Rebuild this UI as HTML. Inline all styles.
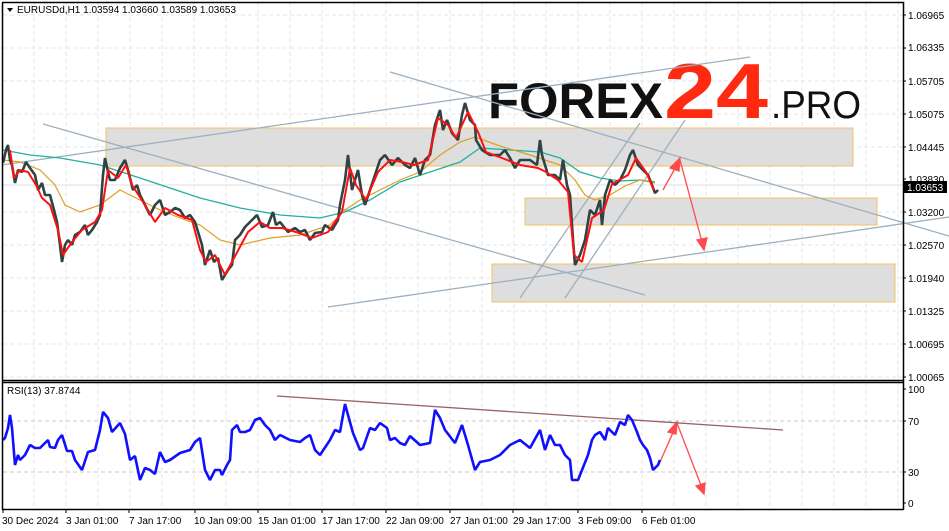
<!DOCTYPE html>
<html><head><meta charset="utf-8"><style>
html,body{margin:0;padding:0;background:#fff;width:949px;height:531px;overflow:hidden}
svg{display:block}
text{font-family:"Liberation Sans",sans-serif;font-size:10px;fill:#000}
</style></head><body>
<svg width="949" height="531" viewBox="0 0 949 531" xmlns="http://www.w3.org/2000/svg">
<g stroke="#e4e4e4" stroke-dasharray="4,3" stroke-width="1">
<path d="M34 3V380M66 3V380M98 3V380M130 3V380M162 3V380M194 3V380M226 3V380M258 3V380M290 3V380M322 3V380M354 3V380M386 3V380M418 3V380M450 3V380M482 3V380M514 3V380M546 3V380M578 3V380M610 3V380M642 3V380M674 3V380M706 3V380M738 3V380M770 3V380M802 3V380M834 3V380M866 3V380M898 3V380"/>
<path d="M3 15H903M3 48H903M3 81H903M3 114H903M3 147H903M3 212H903M3 245H903M3 278H903M3 311H903M3 344H903M3 377H903"/>
<path d="M34 383V509M66 383V509M98 383V509M130 383V509M162 383V509M194 383V509M226 383V509M258 383V509M290 383V509M322 383V509M354 383V509M386 383V509M418 383V509M450 383V509M482 383V509M514 383V509M546 383V509M578 383V509M610 383V509M642 383V509M674 383V509M706 383V509M738 383V509M770 383V509M802 383V509M834 383V509M866 383V509M898 383V509"/>
</g>
<line x1="3" y1="421" x2="903" y2="421" stroke="#c8c8c8" stroke-dasharray="4,3"/>
<line x1="3" y1="472" x2="903" y2="472" stroke="#c8c8c8" stroke-dasharray="4,3"/>
<line x1="3" y1="185" x2="903" y2="185" stroke="#dcdcdc"/>
<!-- zones -->
<rect x="106" y="128" width="747" height="38" fill="#dedede" stroke="#f2c262" stroke-width="1"/>
<rect x="525" y="198" width="352" height="27" fill="#dedede" stroke="#f2c262"/>
<rect x="492" y="264" width="403" height="38" fill="#dedede" stroke="#f2c262"/>
<!-- logo -->
<text x="488" y="118" textLength="175" lengthAdjust="spacingAndGlyphs" style="font-family:'Liberation Sans',sans-serif;font-weight:bold;font-size:50px;fill:#111">FOREX</text>
<text x="664" y="118" textLength="104" lengthAdjust="spacingAndGlyphs" style="font-family:'Liberation Sans',sans-serif;font-weight:bold;font-size:78px;fill:#ff2a10">24</text>
<text x="771" y="118" textLength="90" lengthAdjust="spacingAndGlyphs" style="font-family:'Liberation Sans',sans-serif;font-size:39px;fill:#111">.PRO</text>
<!-- trend lines -->
<g stroke="#9db0bf" stroke-width="1.3" fill="none">
<line x1="43" y1="124" x2="645" y2="295"/>
<line x1="2" y1="165" x2="750" y2="57"/>
<line x1="328" y1="307" x2="949" y2="217"/>
<line x1="390" y1="72" x2="949" y2="236"/>
<line x1="520" y1="298" x2="640" y2="123"/>
<line x1="565" y1="298" x2="685" y2="120"/>
</g>
<!-- MAs -->
<polyline fill="none" stroke="#20b0a0" stroke-width="1.3" points="3,150 30,155 60,158 100,165 140,178 200,198 240,208 280,215 320,218 345,212 370,200 400,182 430,172 460,162 480,148 510,150 540,152 560,158 580,172 600,178 620,181 640,180 655,182"/>
<polyline fill="none" stroke="#dba020" stroke-width="1.2" points="3,160 20,162 40,170 55,185 65,205 80,212 100,205 120,190 140,200 160,210 180,218 200,225 220,240 240,245 270,238 300,235 330,225 345,210 360,200 380,190 400,180 420,172 440,155 460,142 475,137 500,146 530,155 560,165 575,180 585,195 595,200 610,195 625,186 640,180 655,183"/>
<!-- price -->
<polyline fill="none" stroke="#2f4244" stroke-width="2.6" stroke-linejoin="bevel" points="3,163 6,150 8,145 10,160 12,165 15,183 18,170 22,172 26,162 30,168 35,175 38,190 42,183 45,195 50,195 54,210 57,222 60,245 62,262 65,245 68,240 72,245 75,235 80,232 85,225 88,235 92,230 97,222 100,215 103,175 105,158 108,172 110,180 115,180 120,168 125,160 128,170 133,190 137,185 140,195 145,205 150,215 155,205 160,200 165,215 170,212 175,208 180,210 185,218 190,215 195,222 202,245 205,265 210,250 214,262 218,258 222,280 228,270 232,265 235,240 240,235 245,227 252,220 257,215 262,227 268,225 273,212 276,225 280,222 288,232 295,228 300,232 305,230 310,240 315,233 322,232 325,225 332,230 338,220 340,205 345,180 348,155 352,190 358,170 362,195 365,205 370,190 375,175 380,160 385,155 392,165 398,158 405,165 410,168 415,158 420,175 425,160 430,155 435,125 440,110 443,130 447,120 452,133 458,140 462,115 465,103 470,120 475,125 476,140 482,150 490,155 500,155 505,150 510,158 515,168 520,160 530,160 537,165 540,140 542,155 548,175 555,175 560,180 563,160 567,185 570,195 573,240 575,265 580,255 585,240 590,210 595,215 600,200 602,225 605,195 610,180 615,185 620,180 625,170 630,155 633,150 638,165 643,170 648,175 652,185 655,193 658,190"/>
<polyline fill="none" stroke="#ff1010" stroke-width="2" stroke-linejoin="bevel" points="10,150 14,178 20,170 28,172 36,185 42,198 50,205 58,230 63,255 72,242 82,230 95,222 102,210 108,170 118,178 126,165 132,185 145,205 155,222 165,208 178,215 192,220 200,250 206,262 215,255 225,275 234,258 248,232 260,222 270,228 282,228 296,232 312,238 328,232 342,212 350,168 356,185 366,200 378,172 390,160 402,162 414,165 428,160 438,118 448,125 456,138 468,112 478,132 486,152 502,158 520,165 538,168 546,172 558,180 568,192 574,255 582,262 592,218 604,210 612,184 628,175 636,158 646,172 654,190"/>
<!-- arrows -->
<g stroke="#ff4a4a" stroke-width="1.3" fill="#ff4a4a">
<line x1="663" y1="190" x2="678" y2="163"/>
<polygon points="680,158 670,168 679,171"/>
<line x1="680" y1="160" x2="702" y2="242"/>
<polygon points="704,250 697,240 707,238"/>
<line x1="660" y1="462" x2="675" y2="428"/>
<polygon points="677,422 668,432 676,434"/>
<line x1="677" y1="423" x2="702" y2="488"/>
<polygon points="704,494 696,486 705,483"/>
</g>
<!-- RSI -->
<line x1="277" y1="396" x2="783" y2="430" stroke="#9a6262" stroke-width="1.3"/>
<polyline fill="none" stroke="#1010ff" stroke-width="2.6" stroke-linejoin="bevel" points="3,440 5,438 8,428 10,415 12,428 15,465 18,455 20,460 25,455 30,445 35,448 40,448 43,445 48,440 50,447 55,448 58,440 62,435 67,451 72,451 75,460 82,470 88,452 95,450 100,430 103,412 108,418 112,432 120,423 125,434 130,460 135,456 140,480 145,468 150,470 155,474 160,452 165,462 170,460 180,453 190,450 195,442 200,438 205,470 210,480 215,470 220,470 222,475 227,465 230,460 232,430 237,425 240,432 245,432 250,430 255,420 260,418 265,425 270,430 275,440 280,435 290,440 300,442 305,438 310,435 315,450 320,455 330,440 335,430 340,432 345,404 348,415 353,433 360,450 363,448 370,428 375,430 380,423 387,428 390,440 395,438 400,443 405,445 410,436 420,445 430,443 435,410 440,418 445,430 455,443 462,425 468,445 475,470 480,462 490,460 500,455 510,445 520,440 530,448 540,430 545,450 550,435 555,445 560,445 565,455 570,460 572,480 578,480 582,470 588,455 592,440 595,435 600,432 605,440 608,428 615,435 620,422 625,425 628,415 632,420 637,432 640,440 643,445 647,450 650,458 653,470 658,465 660,460"/>
<!-- frames -->
<g stroke="#000" stroke-width="1.5" fill="none">
<path d="M2.5 2.5V510"/>
<path d="M2 2.5H903.5V510"/>
<path d="M2 380.5H903.5"/>
<path d="M2 382.5H903.5"/>
<path d="M2 509.5H903.5"/>
</g>
<g stroke="#000" stroke-width="1">
<path d="M903 15h3M903 48h3M903 81h3M903 114h3M903 147h3M903 179h3M903 212h3M903 245h3M903 278h3M903 311h3M903 344h3M903 377h3M903 389h3M903 421h3M903 472h3M903 503h3"/>
<path d="M3 510v3M66 510v3M129 510v3M195 510v3M258 510v3M322 510v3M386 510v3M450 510v3M513 510v3M578 510v3M642 510v3"/>
</g>
<g>
<text x="908" y="19">1.06965</text><text x="908" y="51">1.06335</text><text x="908" y="85">1.05705</text>
<text x="908" y="118">1.05075</text><text x="908" y="151">1.04445</text><text x="908" y="183">1.03830</text>
<text x="908" y="216">1.03200</text><text x="908" y="249">1.02570</text><text x="908" y="282">1.01940</text>
<text x="908" y="315">1.01325</text><text x="908" y="348">1.00695</text><text x="908" y="381">1.00065</text>
</g>
<rect x="904" y="181" width="43" height="12" fill="#000"/>
<text x="907" y="191" style="fill:#fff">1.03653</text>
<text x="908" y="393">100</text><text x="908" y="425">70</text><text x="908" y="476">30</text><text x="908" y="507">0</text>
<polygon points="7,8 13,8 10,12" fill="#000"/>
<text x="17" y="13">EURUSDd,H1  1.03594 1.03660 1.03589 1.03653</text>
<text x="7" y="394">RSI(13) 37.8744</text>
<g>
<text x="2" y="524">30 Dec 2024</text><text x="66" y="524">3 Jan 01:00</text><text x="129" y="524">7 Jan 17:00</text>
<text x="194" y="524">10 Jan 09:00</text><text x="258" y="524">15 Jan 01:00</text><text x="322" y="524">17 Jan 17:00</text>
<text x="386" y="524">22 Jan 09:00</text><text x="450" y="524">27 Jan 01:00</text><text x="513" y="524">29 Jan 17:00</text>
<text x="578" y="524">3 Feb 09:00</text><text x="642" y="524">6 Feb 01:00</text>
</g>
</svg>
</body></html>
